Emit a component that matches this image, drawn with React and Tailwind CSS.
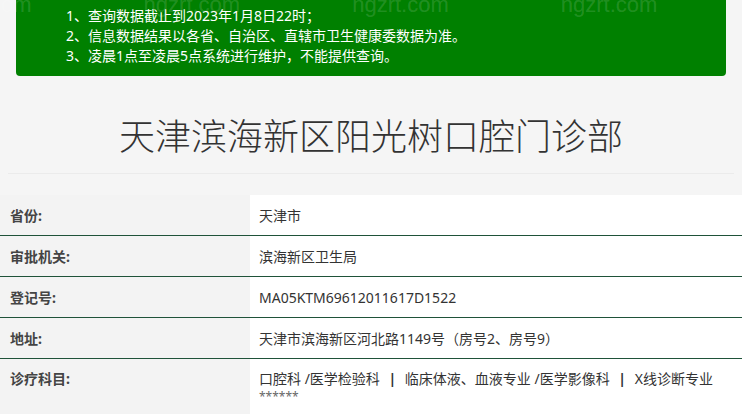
import React from "react";

const rows = [
  { label: "省份:", value: "天津市" },
  { label: "审批机关:", value: "滨海新区卫生局" },
  { label: "登记号:", value: "MA05KTM69612011617D1522" },
  { label: "地址:", value: "天津市滨海新区河北路1149号（房号2、房号9）" },
];

export default function App() {
  return (
    <div
      className="relative w-[742px] h-[414px] overflow-hidden bg-[#f5f5f5] text-[#333]"
      style={{ fontFamily: '"Noto Sans", "Noto Sans CJK SC", sans-serif' }}
    >
      <div className="px-4">
        <div className="overflow-hidden rounded-b-[4px] bg-[#008000] pl-[50px] pt-[6px] pb-[10px] text-[14px] leading-[20px] text-white">
          <div>1、查询数据截止到2023年1月8日22时；</div>
          <div>2、信息数据结果以各省、自治区、直辖市卫生健康委数据为准。</div>
          <div>3、凌晨1点至凌晨5点系统进行维护，不能提供查询。</div>
        </div>
      </div>

      <div className="mx-2 mt-[12px] flex h-[86px] items-center justify-center border-b border-[#ebebeb] pt-[12px]">
        <h1 className="text-[36px] font-light leading-none text-[#333]">
          天津滨海新区阳光树口腔门诊部
        </h1>
      </div>

      <div className="mt-[21px] w-[760px]">
        {rows.map((r) => (
          <div key={r.label} className="flex border-b border-[#1f5239] text-[14px]">
            <div className="flex h-[40px] w-[250px] items-center bg-[#f3f3f3] pl-[10px] font-bold text-[#444]">
              {r.label}
            </div>
            <div className="flex h-[40px] flex-1 items-center bg-white pl-[9px] text-[#333]">
              {r.value}
            </div>
          </div>
        ))}
        <div className="flex text-[14px]">
          <div className="w-[250px] bg-[#f3f3f3] pl-[10px] pt-[10px] pb-[20px] font-bold leading-[20px] text-[#444]">
            诊疗科目:
          </div>
          <div className="flex-1 bg-white pl-[9px] pt-[10px] pb-[20px] leading-[20px] text-[#333]">
            <div>
              口腔科 /医学检验科 <span className="mx-[5px] font-bold">|</span> 临床体液、血液专业 /医学影像科{" "}
              <span className="mx-[5px] font-bold">|</span> X线诊断专业
            </div>
            <div className="text-[12px] leading-[16px] text-[#666]">******</div>
          </div>
        </div>
      </div>

      <div
        className="pointer-events-none absolute inset-x-0 top-[-9px] flex gap-[112px] pl-[10px] text-[22px] leading-[28px] text-white/15"
        style={{ fontFamily: '"Liberation Sans", sans-serif' }}
      >
        <span className="-ml-[75px]">ngzrt.com</span>
        <span>ngzrt.com</span>
        <span>ngzrt.com</span>
        <span>ngzrt.com</span>
      </div>
    </div>
  );
}
